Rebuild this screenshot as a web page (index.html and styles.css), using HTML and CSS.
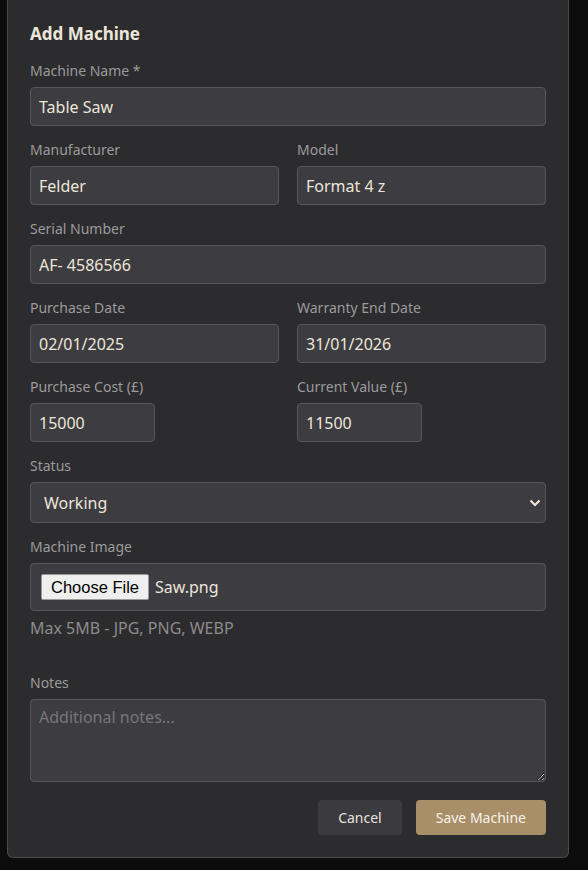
FILE: index.html
```html
<!DOCTYPE html>
<html lang="en">
    <head>
        <meta charset="UTF-8" />
        <title>Add Machine</title>
        <link rel="stylesheet" href="styles.css">
    </head>

    <body>
        <div class="modal">
            <h2 class="modal-title">Add Machine</h2>
            <form class="machine-form">
                <div class="field">
                    <label>Machine Name *</label>
                    <input type="text" class="input" value="Table Saw" />
                </div>
                <div class="row">
                    <div class="field">
                        <label>Manufacturer</label>
                        <input type="text" class="input" value="Felder" />
                    </div>
                    <div class="field">
                        <label>Model</label>
                        <input type="text" class="input" value="Format 4 z" />
                    </div>
                </div>
                <div class="field">
                    <label>Serial Number</label>
                    <input type="text" class="input" value="AF- 4586566" />
                </div>
                <div class="row">
                    <div class="field">
                        <label>Purchase Date</label>
                        <input type="text" class="input" value="02/01/2025" />
                    </div>
                    <div class="field">
                        <label>Warranty End Date</label>
                        <input type="text" class="input" value="31/01/2026" />
                    </div>
                </div>
                <div class="row">
                    <div class="field">
                        <label>Purchase Cost (£)</label>
                        <input type="text" class="input input-short" value="15000" />
                    </div>
                    <div class="field">
                        <label>Current Value (£)</label>
                        <input type="text" class="input input-short" value="11500" />
                    </div>
                </div>
                <div class="field">
                    <label>Status</label>
                    <div class="select-wrap">
                        <select class="input select">
                            <option>Working</option>
                            <option>Needs Repair</option>
                            <option>Out of Service</option>
                        </select>
                        <svg class="chevron" width="12" height="8" viewBox="0 0 12 8">
                            <path d="M1.5 1.5 L6 6 L10.5 1.5" fill="none" stroke="#ece6d8" stroke-width="2.2" />
                        </svg>
                    </div>
                </div>
                <div class="field field-file">
                    <label>Machine Image</label>
                    <div class="input file-box">
                        <button type="button" class="file-btn">Choose File</button>
                        <span class="file-name">Saw.png</span>
                    </div>
                    <p class="help">Max 5MB - JPG, PNG, WEBP</p>
                </div>
                <div class="field">
                    <label>Notes</label>
                    <textarea class="input notes" placeholder="Additional notes..."></textarea>
                </div>
                <div class="actions">
                    <button type="button" class="btn btn-cancel">Cancel</button>
                    <button type="button" class="btn btn-save">Save Machine</button>
                </div>
            </form>
        </div>
    </body>
</html>
```

FILE: styles.css
```css
body {
    margin: 0;
    background: #0c0c0c;
    font-family: "Noto Sans", "Open Sans", sans-serif;
    color: #ece6d8;
}

.modal {
    width: 516px;
    margin-left: 7px;
    padding: 22px 22px 22px 22px;
    background: #2c2c2e;
    border: 1px solid #4a4a4d;
    border-top: 0;
    border-radius: 0 0 6px 6px;
}

.modal-title {
    margin: 0 0 14px;
    font-size: 17px;
    line-height: 24px;
    font-weight: 700;
}

.field {
    margin-bottom: 13px;
}

.field label {
    display: block;
    padding-top: 1px;
    margin-bottom: 6px;
    font-size: 14px;
    line-height: 20px;
    color: #9b9a9c;
}

.input {
    box-sizing: border-box;
    display: block;
    width: 100%;
    height: 39px;
    padding: 0 8px;
    background: #3d3c41;
    border: 1px solid #56555a;
    border-radius: 4px;
    font-family: inherit;
    font-size: 16px;
    color: #ece6d8;
    outline: none;
}

.input-short {
    width: 125px;
}

/* 2열 */
.row {
    display: grid;
    grid-template-columns: 1fr 1fr;
    column-gap: 18px;
}

.select-wrap {
    position: relative;
}

.select {
    height: 41px;
    padding: 0 13px;
    appearance: none;
}

.chevron {
    position: absolute;
    right: 5px;
    top: 17px;
}

.file-box {
    display: flex;
    align-items: center;
    gap: 6px;
    height: 48px;
    padding: 0 10px;
}

.file-btn {
    height: 26px;
    padding: 0 9px;
    background: #efefef;
    border: 1px solid #9a9a9a;
    border-radius: 2px;
    font-family: "Liberation Sans", Arial, sans-serif;
    font-size: 16.5px;
    color: #000;
}

.file-name {
    font-size: 16px;
}

.help {
    margin: 7px 0 34px;
    font-size: 16px;
    line-height: 20px;
    color: #8c8b8d;
}

.notes {
    height: 83px;
    padding: 6px 8px;
    resize: vertical;
}

.notes::placeholder {
    color: #77767a;
}

.actions {
    display: flex;
    justify-content: flex-end;
    gap: 14px;
    margin-top: 18px;
}

.btn {
    height: 35px;
    padding: 0 20px;
    border: 0;
    border-radius: 4px;
    font-family: inherit;
    font-size: 14px;
}

.btn-cancel {
    background: #3b3a3f;
    color: #e6e2dc;
}

.btn-save {
    background: #a88f68;
    color: #f7f2ea;
}
```
